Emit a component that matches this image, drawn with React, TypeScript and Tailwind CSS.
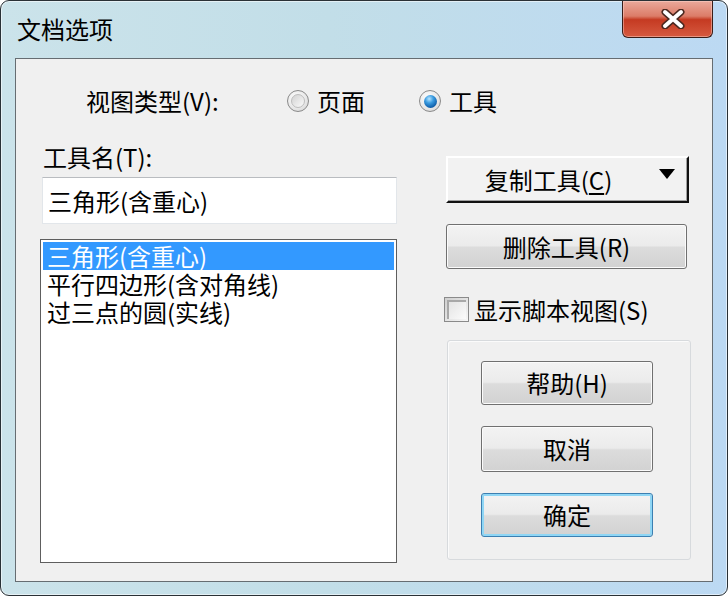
const FONT = "font-['Noto_Sans_CJK_SC','Liberation_Sans',sans-serif]";

const WIN7_BTN =
  "flex items-center justify-center rounded-[3px] border bg-[linear-gradient(to_bottom,#f3f3f3_0%,#ebebeb_48%,#dcdcdc_52%,#d2d2d2_100%)] text-[24px] leading-none text-black";

function CloseButton() {
  return (
    <div className="flex h-[37px] w-[91px] items-center justify-center rounded-b-[6px] border border-t-0 border-[#3a1d18] bg-[linear-gradient(to_bottom,#eaa99b_0%,#dc7c68_42%,#c53a22_52%,#d65a40_100%)] pl-[10px] shadow-[inset_0_0_0_1px_rgba(255,220,210,0.45)]">
      <svg width="26" height="20" viewBox="0 0 26 20">
        <path d="M5 3 L21 17 M21 3 L5 17" stroke="#4b2820" strokeWidth="7" strokeLinecap="round" />
        <path d="M5 3 L21 17 M21 3 L5 17" stroke="#ffffff" strokeWidth="4" strokeLinecap="round" />
      </svg>
    </div>
  );
}

function Radio({ checked }: { checked?: boolean }) {
  return (
    <span className="flex h-[22px] w-[22px] shrink-0 items-center justify-center rounded-full border border-[#8a8a8a] bg-[radial-gradient(circle_at_40%_35%,#ffffff_0%,#e6e6e6_60%,#cfcfcf_100%)]">
      {checked ? (
        <span className="h-[13px] w-[13px] rounded-full bg-[radial-gradient(circle_at_40%_30%,#b8e6ff_0%,#3a9be0_35%,#0c5aa6_75%,#173a70_100%)]" />
      ) : (
        <span className="h-[14px] w-[14px] rounded-full border border-[#bdbdbd] bg-[linear-gradient(135deg,#d2d2d2,#fafafa)]" />
      )}
    </span>
  );
}

export default function App() {
  return (
    <div className={`h-[596px] w-[728px] bg-white ${FONT}`}>
      <div className="flex h-full flex-col rounded-[9px] border border-[#2a3136] bg-[linear-gradient(to_right,#cbe3ea_0%,#c2dee8_45%,#bcd9f3_100%)] shadow-[inset_0_0_0_1px_rgba(255,255,255,0.55)]">
        {/* заголовок окна */}
        <div className="flex h-[57px] items-start justify-between pl-[16px] pr-[14px]">
          <div className="pt-[13px] text-[24px] leading-[30px] text-black">文档选项</div>
          <CloseButton />
        </div>

        <div className="mx-[14px] mb-[13px] flex flex-1 flex-col border border-[#666d72] bg-[#f0f0f0] pl-[24px] pr-[20px] pt-[28px] text-black">
          {/* тип вида */}
          <div className="flex h-[28px] items-center pl-[46px] text-[24px]">
            <span className="w-[201px]">视图类型(V):</span>
            <span className="flex w-[132px] items-center gap-[8px]">
              <Radio />
              页面
            </span>
            <span className="flex items-center gap-[8px]">
              <Radio checked />
              工具
            </span>
          </div>

          <div className="mt-[30px] flex gap-[47px]">
            {/* левая колонка */}
            <div className="flex w-[357px] shrink-0 flex-col">
              <div className="pl-[3px] text-[24px] leading-[24px]">工具名(T):</div>
              <div className="ml-[2px] mt-[8px] flex h-[47px] items-center border border-[#e2e6ea] border-t-[#b9bcc0] bg-white pl-[5px] text-[24px]">
                三角形(含重心)
              </div>
              <div className="mt-[15px] h-[324px] border border-[#5e5e5e] bg-white px-[2px] pt-[2px] text-[24px]">
                {["三角形(含重心)", "平行四边形(含对角线)", "过三点的圆(实线)"].map((t, i) => (
                  <div
                    key={t}
                    className={`h-[28px] pl-[4px] leading-[28px] ${
                      i === 0 ? "bg-[#3399ff] text-white" : ""
                    }`}
                  >
                    {t}
                  </div>
                ))}
              </div>
            </div>

            {/* правая колонка */}
            <div className="flex w-[247px] shrink-0 flex-col pt-[11px]">
              <div className="relative ml-[2px] flex h-[47px] w-[243px] items-center justify-center border-2 border-l-white border-t-white border-b-[#111] border-r-[#111] bg-[#f2f2f2] pr-[38px] text-[24px] shadow-[inset_-1px_-1px_0_#a0a0a0]">
                复制工具(<span className="underline underline-offset-[3px]">C</span>)
                <svg className="absolute right-[12px] top-[11px]" width="16" height="10" viewBox="0 0 16 10">
                  <path d="M0 0 H16 L8 10 Z" fill="#000" />
                </svg>
              </div>

              <div className={`${WIN7_BTN} ml-[2px] mt-[21px] h-[45px] w-[241px] border-[#707070] shadow-[inset_0_0_0_1px_#fbfbfb]`}>
                删除工具(R)
              </div>

              <div className="mt-[28px] flex h-[25px] items-center gap-[5px] text-[24px]">
                <span className="flex h-[25px] w-[25px] shrink-0 border border-[#8a8a8a] bg-[linear-gradient(135deg,#cfcfcf,#f7f7f7)] p-[2px]">
                  <span className="flex-1 border-l-2 border-t-2 border-[#a8a8a8] bg-[linear-gradient(135deg,#e4e4e4,#fbfbfb)]" />
                </span>
                显示脚本视图(S)
              </div>

              <div className="ml-[3px] mt-[18px] flex h-[220px] w-[244px] flex-col gap-[21px] rounded-[3px] border border-[#d7dadd] pl-[33px] pt-[20px] shadow-[inset_1px_1px_0_#fbfbfb]">
                <div className={`${WIN7_BTN} h-[44px] w-[172px] border-[#707070] shadow-[inset_0_0_0_1px_#fbfbfb]`}>
                  帮助(H)
                </div>
                <div className={`${WIN7_BTN} h-[46px] w-[172px] border-[#707070] shadow-[inset_0_0_0_1px_#fbfbfb]`}>
                  取消
                </div>
                <div className={`${WIN7_BTN} h-[44px] w-[172px] border-[#3c7fb1] shadow-[inset_0_0_0_2px_#8fd6f5]`}>
                  确定
                </div>
              </div>
            </div>
          </div>
        </div>
      </div>
    </div>
  );
}
